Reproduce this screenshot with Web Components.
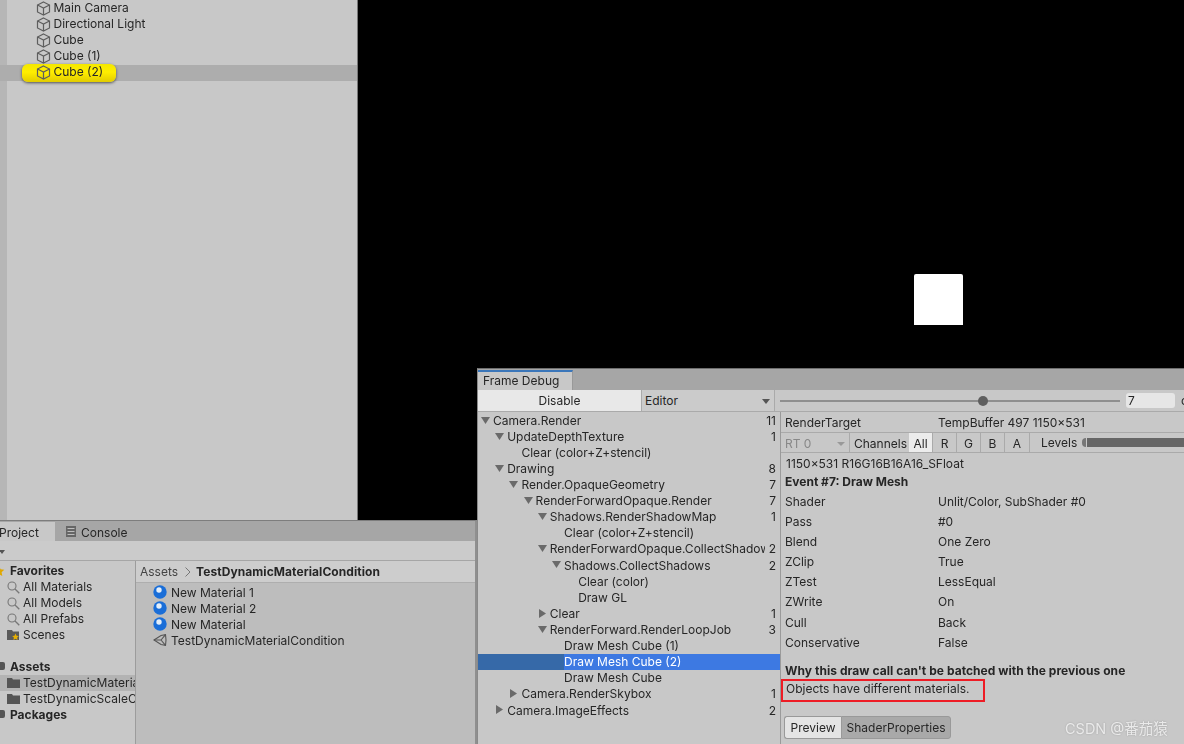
<!DOCTYPE html>
<html>
<head>
<meta charset="utf-8">
<style>
  html, body { margin: 0; height: 100%; background: #000; overflow: hidden; }
  body { font: 12px/16px Inter, "Noto Sans CJK SC", sans-serif; color: #262626; }
</style>
</head>
<body>
<unity-editor>
  <hierarchy-panel slot="hierarchy">
    <hierarchy-item>Main Camera</hierarchy-item>
    <hierarchy-item>Directional Light</hierarchy-item>
    <hierarchy-item>Cube</hierarchy-item>
    <hierarchy-item>Cube (1)</hierarchy-item>
    <hierarchy-item marked>Cube (2)</hierarchy-item>
  </hierarchy-panel>
  <project-panel slot="project">
    <side-item slot="side" kind="head" icon="star">Favorites</side-item>
    <side-item slot="side" icon="search">All Materials</side-item>
    <side-item slot="side" icon="search">All Models</side-item>
    <side-item slot="side" icon="search">All Prefabs</side-item>
    <side-item slot="side" icon="scenes">Scenes</side-item>
    <side-item slot="side" kind="spacer"></side-item>
    <side-item slot="side" kind="head" icon="drive">Assets</side-item>
    <side-item slot="side" icon="folder" selected>TestDynamicMaterialCondition</side-item>
    <side-item slot="side" icon="folder">TestDynamicScaleCondition</side-item>
    <side-item slot="side" kind="head" icon="drive">Packages</side-item>
    <asset-item slot="assets" icon="material">New Material 1</asset-item>
    <asset-item slot="assets" icon="material">New Material 2</asset-item>
    <asset-item slot="assets" icon="material">New Material</asset-item>
    <asset-item slot="assets" icon="unity">TestDynamicMaterialCondition</asset-item>
  </project-panel>
  <frame-debugger slot="debugger">
    <event-row slot="events" depth="0" arrow="down" count="11">Camera.Render</event-row>
    <event-row slot="events" depth="1" arrow="down" count="1">UpdateDepthTexture</event-row>
    <event-row slot="events" depth="2">Clear (color+Z+stencil)</event-row>
    <event-row slot="events" depth="1" arrow="down" count="8">Drawing</event-row>
    <event-row slot="events" depth="2" arrow="down" count="7">Render.OpaqueGeometry</event-row>
    <event-row slot="events" depth="3" arrow="down" count="7">RenderForwardOpaque.Render</event-row>
    <event-row slot="events" depth="4" arrow="down" count="1">Shadows.RenderShadowMap</event-row>
    <event-row slot="events" depth="5">Clear (color+Z+stencil)</event-row>
    <event-row slot="events" depth="4" arrow="down" count="2">RenderForwardOpaque.CollectShadows</event-row>
    <event-row slot="events" depth="5" arrow="down" count="2">Shadows.CollectShadows</event-row>
    <event-row slot="events" depth="6">Clear (color)</event-row>
    <event-row slot="events" depth="6">Draw GL</event-row>
    <event-row slot="events" depth="4" arrow="right" count="1">Clear</event-row>
    <event-row slot="events" depth="4" arrow="down" count="3">RenderForward.RenderLoopJob</event-row>
    <event-row slot="events" depth="5">Draw Mesh Cube (1)</event-row>
    <event-row slot="events" depth="5" selected>Draw Mesh Cube (2)</event-row>
    <event-row slot="events" depth="5">Draw Mesh Cube</event-row>
    <event-row slot="events" depth="2" arrow="right" count="1">Camera.RenderSkybox</event-row>
    <event-row slot="events" depth="1" arrow="right" count="2">Camera.ImageEffects</event-row>
    <prop-row slot="props" label="Shader">Unlit/Color, SubShader #0</prop-row>
    <prop-row slot="props" label="Pass">#0</prop-row>
    <prop-row slot="props" label="Blend">One Zero</prop-row>
    <prop-row slot="props" label="ZClip">True</prop-row>
    <prop-row slot="props" label="ZTest">LessEqual</prop-row>
    <prop-row slot="props" label="ZWrite">On</prop-row>
    <prop-row slot="props" label="Cull">Back</prop-row>
    <prop-row slot="props" label="Conservative">False</prop-row>
  </frame-debugger>
</unity-editor>

<script>
const ICONS = {
    cube: '<svg width="15" height="15" viewBox="0 0 15 15" fill="none" stroke="#5e5e5e" stroke-width="1.2"><path d="M7.5 1 13.5 4v7l-6 3-6-3V4z"/><path d="M1.5 4l6 3 6-3M7.5 7v7"/></svg>',
    star: '<svg width="12" height="12" viewBox="0 0 12 12"><path d="M6 .8l1.6 3.4 3.7.5-2.7 2.6.7 3.7L6 9.2 2.7 11l.7-3.7L.7 4.7l3.700-.5z" fill="#e0a800"/></svg>',
    search: '<svg width="13" height="13" viewBox="0 0 13 13" fill="none" stroke="#777" stroke-width="1.1"><circle cx="5" cy="5" r="4"/><path d="M8 8l4.3 4.3" stroke-width="1.3"/></svg>',
    folder: '<svg width="13" height="11" viewBox="0 0 13 11"><path d="M0 1h5l1 1.5h7V11H0z" fill="#555"/></svg>',
    scenes: '<svg width="13" height="12" viewBox="0 0 13 12"><path d="M0 1h5l1 1.5h6V11H0z" fill="#5a5a5a"/><path d="M8.5 4.5l1 2.2 2.4.3-1.8 1.6.5 2.4-2.100-1.200-2.100 1.200.5-2.400L5.100 7l2.400-.3z" fill="#e8b000"/></svg>',
    drive: '<svg width="12" height="10" viewBox="0 0 12 10"><rect y="1" width="12" height="8" rx="2" fill="#555"/></svg>',
    material: '<svg width="14" height="14" viewBox="0 0 14 14"><circle cx="7" cy="7" r="6.7" fill="#1a6ed8"/><circle cx="6" cy="5" r="2.7" fill="#e4effa"/></svg>',
    unity: '<svg width="14" height="14" viewBox="0 0 14 14" fill="none" stroke="#555" stroke-width="1.1"><path d="M1 7 8 2.5l4.5-.8L13 7l-.5 5.3-4.500-.8z"/><path d="M1 7h7l4.500-5.300M8 7l4.500 5.300"/></svg>',
    console: '<svg width="10" height="11" viewBox="0 0 10 11"><rect width="10" height="11" fill="#666"/><path d="M1.5 2.5h7M1.5 5.5h7M1.5 8.5h7" stroke="#bdbdbd"/></svg>'
};

class UnityEditor extends HTMLElement {
    constructor() {
        super();
        this.attachShadow({ mode: 'open' });
        this.shadowRoot.innerHTML = `
            <style>
                :host { display: block; position: relative; width: 1184px; height: 744px; overflow: hidden; filter: blur(.45px); }
                .top { display: flex; height: 520px; }
                .scene { flex: 1; position: relative; background: #000; }
                /* the white quad drawn in the game view */
                .quad { position: absolute; left: 556px; top: 274px; width: 49px; height: 51px; background: #fff; border-radius: 2px 2px 0 0; }
                .bottom { width: 477px; height: 224px; }
                ::slotted([slot="debugger"]) { position: absolute; left: 477px; top: 368px; }
                .mark { position: absolute; left: 1065px; top: 720px; font-size: 14.5px; line-height: 18px; color: #eee; opacity: .9; text-shadow: 0 0 2px #999; white-space: nowrap; }
            </style>
            <div class="top">
                <slot name="hierarchy"></slot>
                <div class="scene"><div class="quad"></div></div>
            </div>
            <div class="bottom"><slot name="project"></slot></div>
            <slot name="debugger"></slot>
            <div class="mark">CSDN @番茄猿</div>
        `;
    }
}

class HierarchyPanel extends HTMLElement {
    constructor() {
        super();
        this.attachShadow({ mode: 'open' });
        this.shadowRoot.innerHTML = `
            <style>
                :host {
                    display: block; width: 357px; height: 520px; flex: none;
                    border-right: 1px solid #777;
                    background: linear-gradient(90deg, #b6b6b6 7px, #c8c8c8 7px);
                }
                .rows { padding-top: .5px; }
            </style>
            <div class="rows"><slot></slot></div>
        `;
    }
}

class HierarchyItem extends HTMLElement {
    constructor() {
        super();
        this.attachShadow({ mode: 'open' });
        this.shadowRoot.innerHTML = `
            <style>
                :host { display: flex; align-items: center; gap: 2.5px; height: 16.1px; padding-left: 36px; position: relative; white-space: nowrap; }
                :host([marked]) { background: #adadad; }
                :host([marked])::before {
                    content: ''; position: absolute; left: 22px; top: -1px; width: 94px; height: 18px; border-radius: 6px;
                    background: linear-gradient(#f4e800, #ffee00 45%, #e2cc00);
                    box-shadow: 0 1px 3px rgba(0,0,0,.6);
                }
                svg { position: relative; }
                span { position: relative; top: -.5px; }
            </style>
            ${ICONS.cube}<span><slot></slot></span>
        `;
    }
}

class ProjectPanel extends HTMLElement {
    constructor() {
        super();
        this.attachShadow({ mode: 'open' });
        this.shadowRoot.innerHTML = `
            <style>
                :host { display: flex; flex-direction: column; height: 224px; background: #c8c8c8; border-top: 1px solid #7d7d7d; box-sizing: border-box; border-right: 2px solid #8f8f8f; }
                .tabs { display: flex; height: 20px; background: #a6a6a6; padding-top: 1px; box-sizing: border-box; }
                .tab { height: 19px; line-height: 21px; }
                .tab.on { width: 55px; background: #c8c8c8; text-indent: -1px; }
                .tab.off { display: flex; align-items: center; gap: 5px; padding: 2px 0 0 11px; box-sizing: border-box; }
                .tab.off svg { margin-top: -3px; }
                .tools { height: 20px; background: #cbcbcb; border-bottom: 1px solid #a6a6a6; position: relative; flex: none; box-sizing: border-box; }
                .tools i { position: absolute; left: -1px; top: 9px; border: 3.5px solid transparent; border-top: 4px solid #555; border-bottom: 0; }
                .cols { flex: 1; display: flex; min-height: 0; }
                .side { width: 136px; flex: none; border-right: 1px solid #9c9c9c; padding-top: 2px; box-sizing: border-box; overflow: hidden; }
                .main { flex: 1; background: #bdbdbd; }
                .crumb { height: 22px; background: #cdcdcd; border-bottom: 1px solid #aeaeae; box-sizing: border-box; display: flex; align-items: center; padding: 1px 0 0 4px; white-space: nowrap; }
                .crumb span { color: #444; }
                .crumb svg { margin: 0 5px 0 7px; }
                .crumb b { font-weight: 700; letter-spacing: .07px; }
                .list { padding-top: 2px; }
            </style>
            <div class="tabs">
                <div class="tab on">Project</div>
                <div class="tab off">${ICONS.console}Console</div>
            </div>
            <div class="tools"><i></i></div>
            <div class="cols">
                <div class="side"><slot name="side"></slot></div>
                <div class="main">
                    <div class="crumb">
                        <span>Assets</span>
                        <svg width="6" height="10" viewBox="0 0 6 10" fill="none" stroke="#777"><path d="M.5.5 5 5 .5 9.5"/></svg>
                        <b>TestDynamicMaterialCondition</b>
                    </div>
                    <div class="list"><slot name="assets"></slot></div>
                </div>
            </div>
        `;
    }
}

class SideItem extends HTMLElement {
    constructor() {
        super();
        this.attachShadow({ mode: 'open' });
        const kind = this.getAttribute('kind');
        const icon = ICONS[this.getAttribute('icon')] || '';
        this.shadowRoot.innerHTML = `
            <style>
                :host { display: flex; align-items: center; height: 16.1px; white-space: nowrap; position: relative; padding-left: 23px; overflow: hidden; }
                :host([kind="spacer"]) { height: 15.1px; }
                :host([kind="head"]) { font-weight: 700; padding-left: 10px; }
                :host([selected]) { background: #b3b3b3; }
                .ico { position: absolute; left: 7px; top: 2px; display: flex; }
                :host([kind="head"]) .ico { left: -7px; }
            </style>
            ${kind === 'spacer' ? '' : `<span class="ico">${icon}</span>`}<slot></slot>
        `;
    }
}

class AssetItem extends HTMLElement {
    constructor() {
        super();
        this.attachShadow({ mode: 'open' });
        this.shadowRoot.innerHTML = `
            <style>
                :host { display: flex; align-items: center; gap: 4px; height: 16.1px; padding-left: 17px; white-space: nowrap; }
                svg { margin-top: -2px; }
            </style>
            ${ICONS[this.getAttribute('icon')]}<slot></slot>
        `;
    }
}

class FrameDebugger extends HTMLElement {
    constructor() {
        super();
        this.attachShadow({ mode: 'open' });
        this.shadowRoot.innerHTML = `
            <style>
                :host { display: flex; flex-direction: column; width: 707px; height: 376px; background: #c8c8c8; border-top: 1px solid #6e6e6e; border-left: 1px solid #8a8a8a; box-sizing: border-box; overflow: hidden; }
                .tabs { height: 21px; background: #a6a6a6; flex: none; padding-top: 1px; box-sizing: border-box; }
                .tab { width: 95px; height: 20px; background: #c8c8c8; border-top: 2px solid #3a76ba; border-right: 1px solid #999; box-sizing: border-box; padding-left: 5px; line-height: 18px; }
                .tools { height: 22px; flex: none; display: flex; border-bottom: 1px solid #aaa; box-sizing: border-box; }
                .disable { width: 163px; flex: none; background: #e8e8e8; text-align: center; line-height: 21px; }
                .editor { width: 134px; flex: none; border-left: 1px solid #aaa; border-right: 1px solid #aaa; box-sizing: border-box; padding: 0 3px; line-height: 21px; position: relative; background: #cbcbcb; }
                .editor i { position: absolute; right: 4px; top: 9px; border: 4px solid transparent; border-top: 5px solid #555; border-bottom: 0; }
                .slider { flex: 1; position: relative; display: flex; align-items: center; padding-left: 5px; gap: 6px; min-width: 0; }
                .track { width: 340px; flex: none; height: 2px; background: #8f8f8f; position: relative; }
                .track::after { content: ''; position: absolute; left: 198px; top: -4px; width: 10px; height: 10px; border-radius: 50%; background: #5f5f5f; }
                .num { width: 49px; height: 15px; background: #e6e6e6; border-radius: 3px; box-sizing: border-box; padding-left: 2px; line-height: 15px; flex: none; }
                .of { flex: none; }
                .cols { flex: 1; display: flex; min-height: 0; }
                .events { width: 302px; flex: none; border-right: 1px solid #9a9a9a; overflow: hidden; padding-top: .5px; }
                .detail { flex: 1; display: flex; flex-direction: column; min-width: 0; overflow: hidden; }
                .target { height: 19px; flex: none; display: flex; align-items: center; border-bottom: 1px solid #aaa; padding: 1px 0 0 4px; }
                .target span:first-child { width: 153px; }
                .channels { height: 19px; flex: none; display: flex; border-bottom: 1px solid #aaa; line-height: 21px; white-space: nowrap; }
                .channels > div { border-right: 1px solid #aaa; text-align: center; box-sizing: border-box; flex: none; }
                .channels > .rt { width: 69px; color: #888; text-align: left; padding-left: 4px; position: relative; }
                .rt i { position: absolute; right: 4px; top: 9px; border: 4px solid transparent; border-top: 4px solid #999; border-bottom: 0; }
                .channels > .ch { width: 59px; padding-left: 4px; text-align: left; border-right: 0; }
                .c { width: 24px; }
                .channels > .c.a { width: 25px; }
                .c.all { background: #ececec; }
                .channels > .levels { border: 0; flex: 1; display: flex; align-items: center; padding-left: 11px; gap: 5px; min-width: 0; }
                .bar { flex: 1; height: 9px; border-radius: 4px 0 0 4px; margin-right: -20px; background: linear-gradient(90deg, #777 4px, #c8c8c8 4px, #c8c8c8 5px, #666 5px); }
                .fmt { padding: 3px 0 0 5px; height: 17px; flex: none; }
                .ev { font-weight: 700; padding: 1px 0 0 4px; height: 18.7px; flex: none; box-sizing: border-box; }
                .why { font-weight: 700; letter-spacing: .05px; padding: 10.3px 0 0 4px; height: 16px; flex: none; white-space: nowrap; }
                .red { width: 204px; height: 23px; border: 2px solid #ee1c25; box-sizing: border-box; padding-left: 3px; line-height: 16px; flex: none; }
                .btns { display: flex; margin: 14px 0 0 3px; height: 23px; flex: none; }
                .btns div { line-height: 22px; text-align: center; border: 1px solid #999; box-sizing: border-box; }
                .btns .p { width: 57px; background: #e4e4e4; border-radius: 3px 0 0 3px; border-right: 0; }
                .btns .s { width: 110px; background: #a9a9a9; border-radius: 0 3px 3px 0; }
            </style>
            <div class="tabs"><div class="tab">Frame Debug</div></div>
            <div class="tools">
                <div class="disable">Disable</div>
                <div class="editor">Editor<i></i></div>
                <div class="slider"><div class="track"></div><div class="num">7</div><div class="of">of</div></div>
            </div>
            <div class="cols">
                <div class="events"><slot name="events"></slot></div>
                <div class="detail">
                    <div class="target"><span>RenderTarget</span><span>TempBuffer 497 1150x531</span></div>
                    <div class="channels">
                        <div class="rt">RT 0<i></i></div>
                        <div class="ch">Channels</div>
                        <div class="c all">All</div><div class="c">R</div><div class="c">G</div><div class="c">B</div><div class="c a">A</div>
                        <div class="levels">Levels<div class="bar"></div></div>
                    </div>
                    <div class="fmt">1150x531 R16G16B16A16_SFloat</div>
                    <div class="ev">Event #7: Draw Mesh</div>
                    <div><slot name="props"></slot></div>
                    <div class="why">Why this draw call can't be batched with the previous one</div>
                    <div class="red">Objects have different materials.</div>
                    <div class="btns"><div class="p">Preview</div><div class="s">ShaderProperties</div></div>
                </div>
            </div>
        `;
    }
}

class EventRow extends HTMLElement {
    constructor() {
        super();
        this.attachShadow({ mode: 'open' });
        const depth = Number(this.getAttribute('depth')) || 0;
        const arrow = this.getAttribute('arrow');
        const textX = 15 + depth * 14.2;
        const tri = arrow === 'down' ? '<path d="M0 1h9L4.5 8z"/>' : arrow === 'right' ? '<path d="M1 0l7 4.5L1 9z"/>' : '';
        this.shadowRoot.innerHTML = `
            <style>
                :host { display: flex; align-items: center; height: 16.11px; position: relative; white-space: nowrap; padding-left: ${textX}px; padding-right: 4px; }
                :host([selected]) { color: #fff; background: linear-gradient(90deg, #3669a8 ${textX}px, #3d79e2 ${textX}px); }
                svg { position: absolute; left: ${textX - 12}px; top: 3px; }
                .t { flex: 1; overflow: hidden; min-width: 0; }
                .n { flex: none; margin-left: 4px; }
            </style>
            ${arrow ? `<svg width="9" height="9" viewBox="0 0 9 9" fill="#6a6a6a">${tri}</svg>` : ''}
            <span class="t"><slot></slot></span><span class="n">${this.getAttribute('count') || ''}</span>
        `;
    }
}

class PropRow extends HTMLElement {
    constructor() {
        super();
        this.attachShadow({ mode: 'open' });
        this.shadowRoot.innerHTML = `
            <style>
                :host { display: flex; align-items: center; height: 20.15px; padding-left: 4px; white-space: nowrap; }
                .l { width: 153px; flex: none; }
            </style>
            <span class="l">${this.getAttribute('label')}</span><slot></slot>
        `;
    }
}

customElements.define('unity-editor', UnityEditor);
customElements.define('hierarchy-panel', HierarchyPanel);
customElements.define('hierarchy-item', HierarchyItem);
customElements.define('project-panel', ProjectPanel);
customElements.define('side-item', SideItem);
customElements.define('asset-item', AssetItem);
customElements.define('frame-debugger', FrameDebugger);
customElements.define('event-row', EventRow);
customElements.define('prop-row', PropRow);
</script>
</body>
</html>
